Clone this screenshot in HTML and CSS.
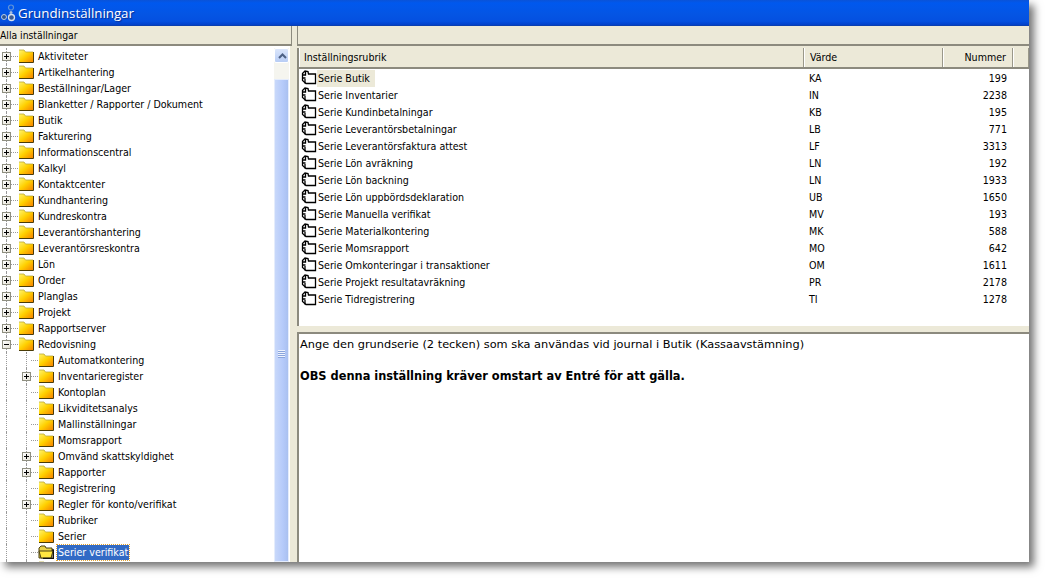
FILE: index.html
```html
<!DOCTYPE html>
<html lang="sv">
<head>
<meta charset="utf-8">
<title>Grundinställningar</title>
<link rel="stylesheet" href="styles.css">
</head>
<body>
<svg class="defs" width="0" height="0" aria-hidden="true">
<defs>
<linearGradient id="fg" x1="0" y1="0" x2="1" y2="1"><stop offset="0" stop-color="#fff56e"/><stop offset=".5" stop-color="#ffd000"/><stop offset="1" stop-color="#f78400"/></linearGradient>
<symbol id="folder" viewBox="0 0 16 14"><path d="M1 1h5l1.500 2H15v10H1z" fill="url(#fg)"/><path d="M1 1h5l1.500 2H15" fill="none" stroke="#b9a83a" stroke-width=".8"/><path d="M15.500 3v10.500H1" fill="none" stroke="#4a3c08"/></symbol>
<symbol id="open" viewBox="0 0 16 14"><path d="M1 3l2-2h4l1 2h6v10H1z" fill="#e9d24a" stroke="#4a4010"/><path d="M1 6h11l3 0-2 7H3z" fill="#ffe640" stroke="#4a4010"/><path d="M14 5h1.500v8.500H5" fill="none" stroke="#111" stroke-width="1.300"/></symbol>
<symbol id="book" viewBox="0 0 16 15"><path d="M1.500 3.500 4 1l3 .5L7.500 4l7 0V13.500H5L1.500 10.500z" fill="#fff" stroke="#000" stroke-width="1.300"/><path d="M4.500 1.500V5H1.500M2 8h2.500M4 9v4.500" fill="none" stroke="#000" stroke-width="1.300"/></symbol>
</defs>
</svg>
<div class="window">
  <div class="titlebar">
    <svg class="appicon" viewBox="0 0 16 18" width="16" height="18"><circle cx="10" cy="3.500" r="2.500" fill="none" stroke="#5f93d8" stroke-width="1.200"/><circle cx="3" cy="13" r="2.500" fill="#2f5590" stroke="#b9cde6"/><circle cx="10.500" cy="13.500" r="3" fill="#3c5c90" stroke="#d8e2ee" stroke-width="1.300"/><circle cx="10" cy="8.500" r="1.500" fill="#a9c0dc"/></svg>
    <span>Grundinställningar</span>
  </div>
  <div class="main">
    <section class="left">
      <div class="panehead">Alla inställningar</div>
      <div class="treewrap">
        <ul class="tree">
          <li class="node"><i class="exp"></i><i class="dash"></i><svg class="fld"><use href="#folder"/></svg><span>Aktiviteter</span></li>
          <li class="node"><i class="exp"></i><i class="dash"></i><svg class="fld"><use href="#folder"/></svg><span>Artikelhantering</span></li>
          <li class="node"><i class="exp"></i><i class="dash"></i><svg class="fld"><use href="#folder"/></svg><span>Beställningar/Lager</span></li>
          <li class="node"><i class="exp"></i><i class="dash"></i><svg class="fld"><use href="#folder"/></svg><span>Blanketter / Rapporter / Dokument</span></li>
          <li class="node"><i class="exp"></i><i class="dash"></i><svg class="fld"><use href="#folder"/></svg><span>Butik</span></li>
          <li class="node"><i class="exp"></i><i class="dash"></i><svg class="fld"><use href="#folder"/></svg><span>Fakturering</span></li>
          <li class="node"><i class="exp"></i><i class="dash"></i><svg class="fld"><use href="#folder"/></svg><span>Informationscentral</span></li>
          <li class="node"><i class="exp"></i><i class="dash"></i><svg class="fld"><use href="#folder"/></svg><span>Kalkyl</span></li>
          <li class="node"><i class="exp"></i><i class="dash"></i><svg class="fld"><use href="#folder"/></svg><span>Kontaktcenter</span></li>
          <li class="node"><i class="exp"></i><i class="dash"></i><svg class="fld"><use href="#folder"/></svg><span>Kundhantering</span></li>
          <li class="node"><i class="exp"></i><i class="dash"></i><svg class="fld"><use href="#folder"/></svg><span>Kundreskontra</span></li>
          <li class="node"><i class="exp"></i><i class="dash"></i><svg class="fld"><use href="#folder"/></svg><span>Leverantörshantering</span></li>
          <li class="node"><i class="exp"></i><i class="dash"></i><svg class="fld"><use href="#folder"/></svg><span>Leverantörsreskontra</span></li>
          <li class="node"><i class="exp"></i><i class="dash"></i><svg class="fld"><use href="#folder"/></svg><span>Lön</span></li>
          <li class="node"><i class="exp"></i><i class="dash"></i><svg class="fld"><use href="#folder"/></svg><span>Order</span></li>
          <li class="node"><i class="exp"></i><i class="dash"></i><svg class="fld"><use href="#folder"/></svg><span>Planglas</span></li>
          <li class="node"><i class="exp"></i><i class="dash"></i><svg class="fld"><use href="#folder"/></svg><span>Projekt</span></li>
          <li class="node"><i class="exp"></i><i class="dash"></i><svg class="fld"><use href="#folder"/></svg><span>Rapportserver</span></li>
          <li class="node"><i class="exp minus"></i><i class="dash"></i><svg class="fld"><use href="#folder"/></svg><span>Redovisning</span></li>
          <li class="node sub"><i class="none"></i><i class="dash"></i><svg class="fld"><use href="#folder"/></svg><span>Automatkontering</span></li>
          <li class="node sub"><i class="exp"></i><i class="dash"></i><svg class="fld"><use href="#folder"/></svg><span>Inventarieregister</span></li>
          <li class="node sub"><i class="none"></i><i class="dash"></i><svg class="fld"><use href="#folder"/></svg><span>Kontoplan</span></li>
          <li class="node sub"><i class="none"></i><i class="dash"></i><svg class="fld"><use href="#folder"/></svg><span>Likviditetsanalys</span></li>
          <li class="node sub"><i class="none"></i><i class="dash"></i><svg class="fld"><use href="#folder"/></svg><span>Mallinställningar</span></li>
          <li class="node sub"><i class="none"></i><i class="dash"></i><svg class="fld"><use href="#folder"/></svg><span>Momsrapport</span></li>
          <li class="node sub"><i class="exp"></i><i class="dash"></i><svg class="fld"><use href="#folder"/></svg><span>Omvänd skattskyldighet</span></li>
          <li class="node sub"><i class="exp"></i><i class="dash"></i><svg class="fld"><use href="#folder"/></svg><span>Rapporter</span></li>
          <li class="node sub"><i class="none"></i><i class="dash"></i><svg class="fld"><use href="#folder"/></svg><span>Registrering</span></li>
          <li class="node sub"><i class="exp"></i><i class="dash"></i><svg class="fld"><use href="#folder"/></svg><span>Regler för konto/verifikat</span></li>
          <li class="node sub"><i class="none"></i><i class="dash"></i><svg class="fld"><use href="#folder"/></svg><span>Rubriker</span></li>
          <li class="node sub"><i class="none"></i><i class="dash"></i><svg class="fld"><use href="#folder"/></svg><span>Serier</span></li>
          <li class="node sub"><i class="none"></i><i class="dash"></i><svg class="fld"><use href="#open"/></svg><span class="sel">Serier verifikat</span></li>
          <li class="node sub"><i class="none"></i><i class="dash"></i><svg class="fld"><use href="#folder"/></svg></li>
        </ul>
        <div class="scrollbar">
          <div class="sbtn"><svg viewBox="0 0 15 15" width="15" height="15"><path d="M4 9l3.500-3.500L11 9" fill="none" stroke="#4d6185" stroke-width="2"/></svg></div>
          <div class="thumb"><span class="grip"></span></div>
        </div>
      </div>
    </section>
    <section class="right">
      <div class="panehead"></div>
      <div class="listbox">
        <div class="row head"><div class="c1">Inställningsrubrik</div><div class="c2">Värde</div><div class="c3">Nummer</div><div class="c4"></div></div>
        <div class="row item"><div class="c1"><svg class="bk"><use href="#book"/></svg><span class="cur">Serie Butik</span></div><div class="c2">KA</div><div class="c3">199</div></div>
        <div class="row item"><div class="c1"><svg class="bk"><use href="#book"/></svg><span>Serie Inventarier</span></div><div class="c2">IN</div><div class="c3">2238</div></div>
        <div class="row item"><div class="c1"><svg class="bk"><use href="#book"/></svg><span>Serie Kundinbetalningar</span></div><div class="c2">KB</div><div class="c3">195</div></div>
        <div class="row item"><div class="c1"><svg class="bk"><use href="#book"/></svg><span>Serie Leverantörsbetalningar</span></div><div class="c2">LB</div><div class="c3">771</div></div>
        <div class="row item"><div class="c1"><svg class="bk"><use href="#book"/></svg><span>Serie Leverantörsfaktura attest</span></div><div class="c2">LF</div><div class="c3">3313</div></div>
        <div class="row item"><div class="c1"><svg class="bk"><use href="#book"/></svg><span>Serie Lön avräkning</span></div><div class="c2">LN</div><div class="c3">192</div></div>
        <div class="row item"><div class="c1"><svg class="bk"><use href="#book"/></svg><span>Serie Lön backning</span></div><div class="c2">LN</div><div class="c3">1933</div></div>
        <div class="row item"><div class="c1"><svg class="bk"><use href="#book"/></svg><span>Serie Lön uppbördsdeklaration</span></div><div class="c2">UB</div><div class="c3">1650</div></div>
        <div class="row item"><div class="c1"><svg class="bk"><use href="#book"/></svg><span>Serie Manuella verifikat</span></div><div class="c2">MV</div><div class="c3">193</div></div>
        <div class="row item"><div class="c1"><svg class="bk"><use href="#book"/></svg><span>Serie Materialkontering</span></div><div class="c2">MK</div><div class="c3">588</div></div>
        <div class="row item"><div class="c1"><svg class="bk"><use href="#book"/></svg><span>Serie Momsrapport</span></div><div class="c2">MO</div><div class="c3">642</div></div>
        <div class="row item"><div class="c1"><svg class="bk"><use href="#book"/></svg><span>Serie Omkonteringar i transaktioner</span></div><div class="c2">OM</div><div class="c3">1611</div></div>
        <div class="row item"><div class="c1"><svg class="bk"><use href="#book"/></svg><span>Serie Projekt resultatavräkning</span></div><div class="c2">PR</div><div class="c3">2178</div></div>
        <div class="row item"><div class="c1"><svg class="bk"><use href="#book"/></svg><span>Serie Tidregistrering</span></div><div class="c2">TI</div><div class="c3">1278</div></div>
      </div>
      <div class="desc">
        <p>Ange den grundserie (2 tecken) som ska användas vid journal i Butik (Kassaavstämning)</p>
        <p class="obs">OBS denna inställning kräver omstart av Entré för att gälla.</p>
      </div>
    </section>
  </div>
</div>
</body>
</html>
```
FILE: styles.css
```css
* { box-sizing: border-box; }
html, body { margin: 0; height: 100%; background: #fff; overflow: hidden; }
body { font-family: "DejaVu Sans Condensed", "Open Sans", sans-serif; font-size: 10.6px; color: #000; }
.defs { display: block; height: 0; }
.window { width: 1029px; height: 562px; display: flex; flex-direction: column; background: #ece9d8; box-shadow: 5px 5px 8px rgba(0,0,0,.55); overflow: hidden; }
.titlebar { height: 26px; flex: none; display: flex; align-items: center; gap: 1px; padding-left: 1px; color: #fff; font: 13.3px "Open Sans", sans-serif; background: linear-gradient(#0a53d8 0, #0058ee 12%, #0455e4 55%, #0450e0 85%, #0340c8 100%); border-bottom: 1px solid #0a3fb0; text-shadow: 1px 1px 1px #0a2f90; }
.main { flex: 1; display: flex; min-height: 0; }
.left { width: 292px; flex: none; display: flex; flex-direction: column; }
.right { flex: 1; margin-left: 5px; display: flex; flex-direction: column; min-width: 0; }
.panehead { height: 20px; flex: none; line-height: 19px; font-size: 10.3px; background: #ece9d8; border-right: 1px solid #8c8a7e; border-bottom: 2px solid #8c8a7e; white-space: nowrap; }
.right .panehead { border-right: 0; border-left: 1px solid #8c8a7e; }
.treewrap { flex: 1; display: flex; background: #fff; min-height: 0; padding-top: 2px; border-right: 2px solid #ece9d8; }
.tree { flex: 1; list-style: none; margin: 0; padding: 0; min-width: 0; overflow: hidden; }
.node { height: 16px; display: flex; align-items: center; position: relative; white-space: nowrap; }
.node.sub { padding-left: 20px; }
.node::before { content: ""; position: absolute; left: 6px; top: 0; bottom: 0; border-left: 1px dotted #9a9a9a; z-index: 0; }
.node.sub::after { content: ""; position: absolute; left: 26px; top: 0; bottom: 0; border-left: 1px dotted #9a9a9a; z-index: 0; }
.exp, .none { width: 9px; height: 9px; margin-left: 2px; flex: none; position: relative; z-index: 1; }
.exp { border: 1px solid #8f8f80; background: linear-gradient(135deg, #fff, #e5e2d6); }
.exp::before { content: ""; position: absolute; left: 1px; right: 1px; top: 3px; height: 1px; background: #000; }
.exp::after { content: ""; position: absolute; top: 1px; bottom: 1px; left: 3px; width: 1px; background: #000; }
.exp.minus::after { display: none; }
.dash { width: 7px; height: 0; border-top: 1px dotted #9a9a9a; flex: none; }
.fld { width: 16px; height: 14px; flex: none; margin-right: 3px; }
.node span { padding: 0 1px; line-height: 15px; }
.node .sel { background: #316ac5; color: #fff; outline: 1px dotted #e0a030; }
.scrollbar { width: 15px; flex: none; margin-right: 1px; margin-left: 2px; background: #f5f5ef; display: flex; flex-direction: column; }
.sbtn { height: 15px; flex: none; background: linear-gradient(#dbe6fb, #b8cdf5); border: 1px solid #fff; border-radius: 2px; }
.thumb { flex: 1; margin-top: 16px; background: linear-gradient(90deg, #c8d8fa, #b5cafa 60%, #a9c0f0); border: 1px solid #e4ecfc; position: relative; }
.grip { position: absolute; left: 3px; right: 3px; top: 270px; height: 8px; background: repeating-linear-gradient(#eef3fe 0 1px, #8aa5dc 1px 2px); }
.listbox { height: 278px; flex: none; margin-top: 2px; background: #fff; border-left: 2px solid #8c8a7e; overflow: hidden; }
.row { display: flex; }
.c1 { width: 505px; flex: none; }
.c2 { width: 139px; flex: none; padding-left: 5px; }
.c3 { width: 70px; flex: none; padding-right: 6px; text-align: right; }
.c4 { flex: 1; }
.head { height: 21px; line-height: 19px; background: #ece9d8; margin-bottom: 1px; border-bottom: 2px solid #8c8a7e; }
.head > div { border-left: 1px solid #fff; border-right: 1px solid #9a988a; }
.head .c1 { padding-left: 4px; }
.item { height: 17px; line-height: 17px; }
.item .c1 { display: flex; align-items: center; padding-left: 2px; }
.bk { width: 16px; height: 15px; flex: none; margin-top: -2px; }
.cur { background: #ece9d8; padding: 0 5px 0 1px; }
.item span:not(.cur) { padding-left: 1px; }
.desc { flex: 1; min-height: 0; margin-top: 6px; background: #fff; border-top: 2px solid #8c8a7e; border-left: 2px solid #8c8a7e; padding: 2px 0 0 1px; font: 11.35px/16px "DejaVu Sans", sans-serif; }
.desc p { margin: 0 0 16px; }
.desc .obs { font-weight: bold; font-size: 11.4px; }
```
